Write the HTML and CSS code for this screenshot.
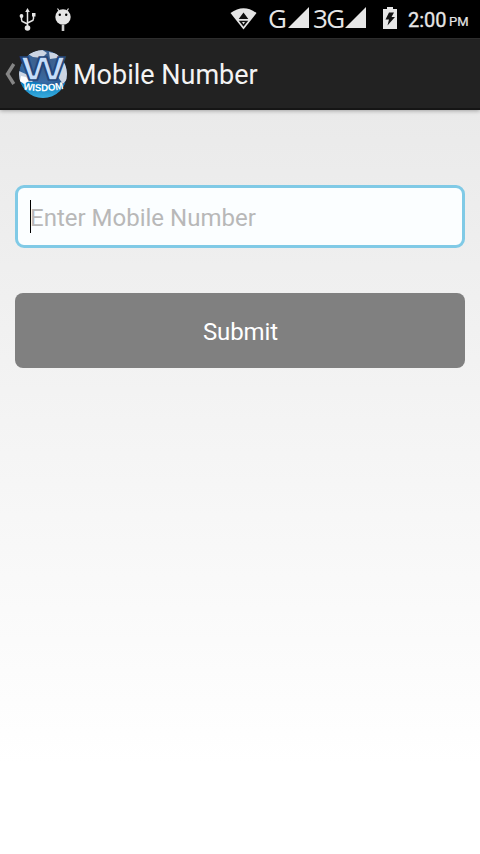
FILE: index.html
```html
<!DOCTYPE html>
<html>
<head>
	<meta charset="UTF-8">
	<title>Mobile Number</title>
	<link rel="stylesheet" href="styles.css">
</head>
<body>
	<div class="status-bar">
		<svg class="usb" width="18" height="24" viewBox="0 0 18 24">
			<path d="M8.500 3v16M2.500 8v3.500q0 2 2 2.500l4 2M14.500 7v3.500q0 2-2 2.500l-4 2" fill="none" stroke="#e6e6e6" stroke-width="1.500"/>
			<path d="M8.500 0l2.300 4H6.200zM13 5h3.500v3.500H13z" fill="#e6e6e6"/>
			<circle cx="2.500" cy="8" r="1.900" fill="#e6e6e6"/>
			<circle cx="8.500" cy="20" r="2.800" fill="#e6e6e6"/>
		</svg>
		<svg class="droid" width="18" height="24" viewBox="0 0 18 24">
			<path d="M3.500 0.500l2 3M14.500 0.500l-2 3" stroke="#e6e6e6" stroke-width="1.200"/>
			<circle cx="9" cy="9" r="7.700" fill="#e6e6e6"/>
			<path d="M9 17v6" stroke="#ccc" stroke-width="2.600"/>
			<circle cx="5.800" cy="6.700" r="1.200"/>
			<circle cx="12.200" cy="6.700" r="1.200"/>
		</svg>
		<svg class="wifi" width="27" height="22" viewBox="0 0 27 22">
			<path d="M0.500 5Q13.500-4.500 26.500 5L13.500 21.500z" fill="#e6e6e6"/>
			<path d="M13.500 4.500l4.800 6.500H8.700zM8.700 12.800h9.600l-4.800 6z" fill="#111"/>
			<path d="M12 14h3l-1.500 2.300z" fill="#e6e6e6"/>
		</svg>
		<span class="net net-g">G</span>
		<svg class="signal" width="21" height="21" viewBox="0 0 21 21"><path d="M21 0v21H0z" fill="#e6e6e6"/></svg>
		<span class="net net-3g">3G</span>
		<svg class="signal" width="21" height="21" viewBox="0 0 21 21"><path d="M21 0v21H0z" fill="#e6e6e6"/></svg>
		<svg class="battery" width="14" height="22" viewBox="0 0 14 22">
			<path d="M4 0h6v2h4v20H0V2h4z" fill="#e6e6e6"/>
			<path d="M6 5.500h5L8.500 10H12l-7.500 8.500L6 12.500H2.500z" fill="#111"/>
		</svg>
		<span class="clock">2:00</span>
		<span class="ampm">PM</span>
	</div>

	<div class="action-bar">
		<svg class="back" width="12" height="24" viewBox="0 0 12 24">
			<path d="M9.800 2L3.500 12l6.300 10" fill="none" stroke="#858585" stroke-width="3.400"/>
		</svg>
		<svg class="logo" width="50" height="50" viewBox="0 0 50 50">
			<defs>
				<radialGradient id="globe" cx="50%" cy="25%" r="75%">
					<stop offset="0" stop-color="#40597f"/>
					<stop offset="0.550" stop-color="#376ba5"/>
					<stop offset="1" stop-color="#173c6e"/>
				</radialGradient>
				<linearGradient id="sea" x1="0" y1="0" x2="0" y2="1">
					<stop offset="0" stop-color="#077ac0"/>
					<stop offset="1" stop-color="#45b9e5"/>
				</linearGradient>
				<clipPath id="disc"><circle cx="25" cy="25" r="24"/></clipPath>
				<path id="curve" d="M5 40.500Q25 44.500 47 39.500"/>
			</defs>
			<g clip-path="url(#disc)">
				<circle cx="25" cy="25" r="24" fill="url(#globe)"/>
				<path d="M10 5L23 0l6 4-5 5-9-1zM31 3l9 2 5 8-6-4-7 1zM39 17l8-5 4 16-6 7-5-7-5-1zM1 22l9 4 5 6-5 5-9-5z" fill="#ccd5e3"/>
				<path d="M0 34Q12 31 25 35t25-2v20H0z" fill="url(#sea)"/>
				<path d="M3 27l5 1 3 4-5 3-4-3z" fill="#fff"/>
			</g>
			<text class="logo-w" x="3" y="31" textLength="44" lengthAdjust="spacingAndGlyphs">W</text>
			<text class="logo-name"><textPath href="#curve" textLength="41" lengthAdjust="spacingAndGlyphs">WISDOM</textPath></text>
		</svg>
		<span class="title">Mobile Number</span>
	</div>

	<form class="content">
		<div class="field">
			<input type="tel" class="mobile" placeholder="Enter Mobile Number">
			<span class="caret"></span>
		</div>
		<button type="button" class="submit">Submit</button>
	</form>
</body>
</html>
```
FILE: styles.css
```css
body {
	margin: 0;
	height: 854px;
	overflow: hidden;
	display: flex;
	flex-direction: column;
	font-family: Roboto, sans-serif;
	background: #fff;
}

.status-bar {
	height: 38px;
	flex: none;
	display: flex;
	align-items: flex-start;
	background: #000;
	color: #e6e6e6;
	white-space: nowrap;
}

.status-bar svg {
	flex: none;
}

.usb {
	margin: 8px 0 0 19px;
}

.droid {
	margin: 8px 0 0 17px;
}

.wifi {
	margin: 8px 0 0 158px;
}

.net {
	flex: none;
	font-family: "Open Sans", sans-serif;
	font-size: 26px;
	line-height: 37px;
}

.net-g {
	width: 20px;
	margin-left: 11px;
}

.net-3g {
	width: 32px;
	margin-left: 4px;
	letter-spacing: -1.5px;
}

.signal {
	margin-top: 7px;
}

.battery {
	margin: 7px 0 0 17px;
}

.clock {
	width: 39px;
	margin-left: 11px;
	font-size: 20px;
	font-weight: 400;
	line-height: 40px;
	-webkit-text-stroke: 0.3px #e6e6e6;
}

.ampm {
	margin-left: 2px;
	font-size: 13px;
	font-weight: 400;
	line-height: 43px;
	-webkit-text-stroke: 0.2px #e6e6e6;
}

.action-bar {
	position: relative;
	height: 72px;
	flex: none;
	box-sizing: border-box;
	display: flex;
	align-items: center;
	background: #222;
	border-top: 1px solid #2d2d2d;
	border-bottom: 2px solid #151515;
	box-shadow: 0 1px 4px rgba(0, 0, 0, 0.3);
}

.back {
	margin-left: 4px;
}

.logo {
	margin-left: 2px;
}

.logo-w {
	font-family: "Liberation Sans", sans-serif;
	font-size: 34px;
	font-weight: bold;
	fill: #c6ddfa;
	stroke: #24477c;
	stroke-width: 1.5px;
}

.logo-name {
	font-family: "Liberation Sans", sans-serif;
	font-size: 10px;
	font-weight: bold;
	fill: #fff;
}

.title {
	margin: 1px 0 0 5px;
	padding-top: 1px;
	font-size: 27px;
	line-height: 36px;
	color: #f3f3f3;
}

.content {
	flex: 1;
	padding: 75px 15px 0;
	background: linear-gradient(#eaeaea, #fff 88%);
}

.field {
	position: relative;
	height: 63px;
	margin-bottom: 45px;
}

.mobile {
	width: 100%;
	height: 63px;
	box-sizing: border-box;
	padding: 3px 12px 0;
	border: 3px solid #80cae6;
	border-radius: 9px;
	background: #fbfeff;
	font-family: inherit;
	font-size: 24px;
	outline: none;
}

.mobile::placeholder {
	color: #b8b8b8;
}

/* text cursor over the start of the hint */
.caret {
	position: absolute;
	left: 15px;
	top: 15px;
	width: 1px;
	height: 33px;
	background: #000;
}

.submit {
	display: block;
	width: 100%;
	height: 75px;
	padding: 3px 0 0 1px;
	border: none;
	border-radius: 8px;
	background: #808080;
	color: #fff;
	font-family: inherit;
	font-size: 24px;
	letter-spacing: -0.1px;
}
```
